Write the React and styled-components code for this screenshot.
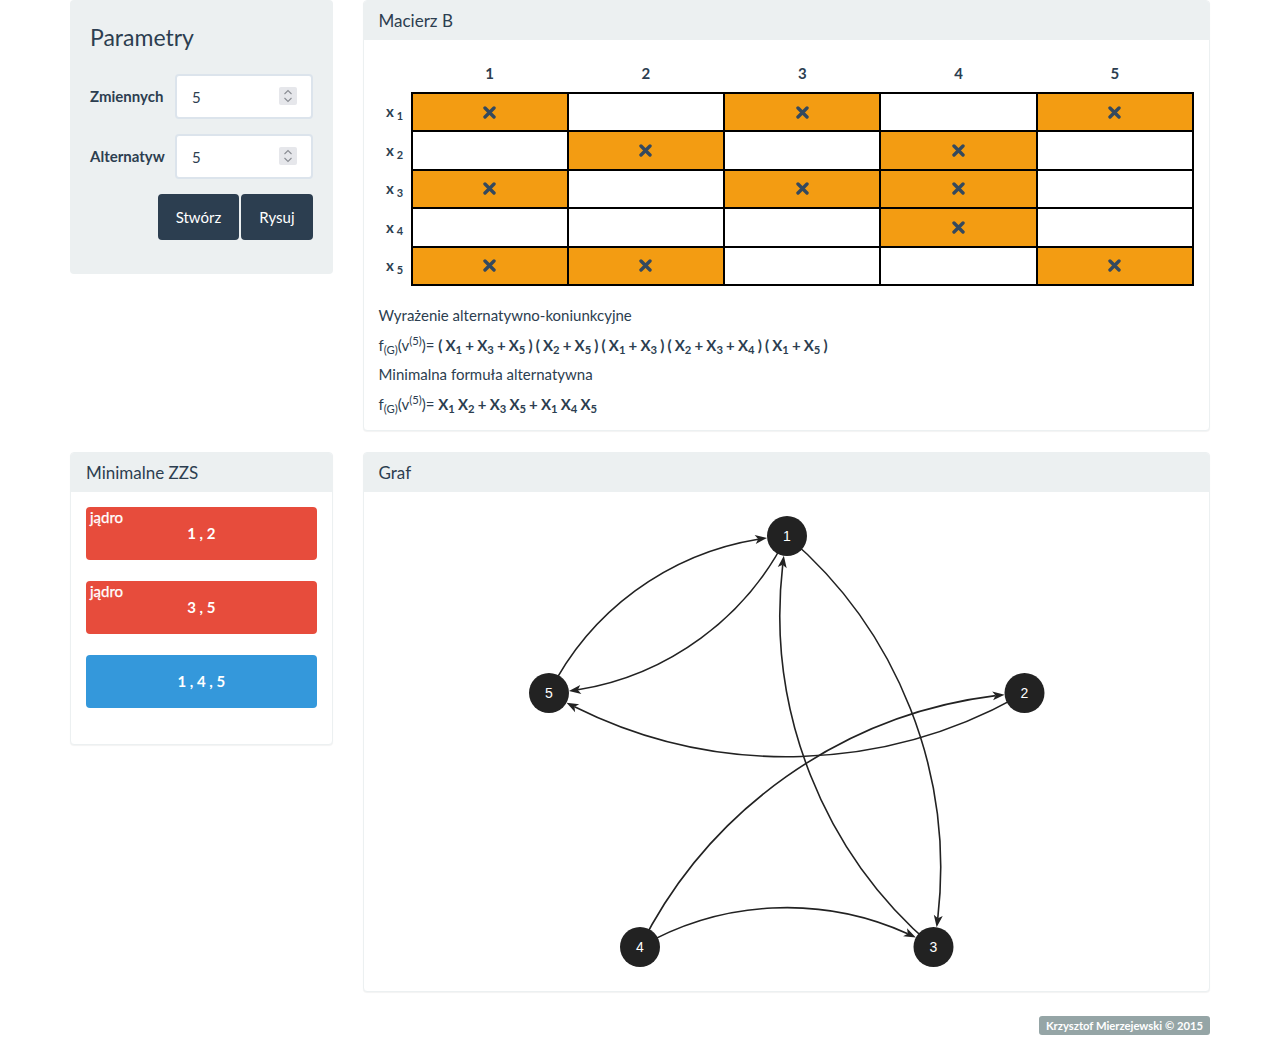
import React from 'react';
import styled, { createGlobalStyle } from 'styled-components';

const GlobalStyle = createGlobalStyle`
  html, body { margin: 0; padding: 0; background: #fff; }
  body {
    font-family: Lato, "Open Sans", "Liberation Sans", sans-serif;
    font-size: 15px;
    line-height: 1.42857;
    color: #2c3e50;
  }
  * { box-sizing: border-box; }
`;

const Container = styled.div`
  width: 1140px;
  margin: 0 auto;
  display: grid;
  grid-template-columns: 262.5px 847.5px;
  column-gap: 30px;
  align-items: start;
`;

const Well = styled.div`
  background: #ecf0f1;
  border-radius: 4px;
  padding: 19px 20px 19px 20px;
`;

const WellTitle = styled.h3`
  margin: 0 0 19px;
  font-size: 23px;
  font-weight: 400;
  line-height: 36px;
`;

const FormRow = styled.div`
  display: grid;
  grid-template-columns: 85px 1fr;
  align-items: center;
  margin-bottom: 15px;
`;

const Label = styled.label`
  font-weight: 700;
  font-size: 15px;
`;

const InputWrap = styled.div`
  position: relative;
`;

const NumberInput = styled.input`
  display: block;
  width: 100%;
  height: 45px;
  padding: 10px 15px;
  font-family: inherit;
  font-size: 15px;
  color: #2c3e50;
  border: 2px solid #dce4ec;
  border-radius: 4px;
  background: #fff;
  outline: none;
  appearance: textfield;
  &::-webkit-inner-spin-button,
  &::-webkit-outer-spin-button {
    -webkit-appearance: none;
    margin: 0;
  }
`;

const Spinner = styled.span`
  position: absolute;
  right: 16px;
  top: 13px;
  width: 18px;
  height: 18px;
  background: #e6e7eb;
  border-radius: 2px;
  pointer-events: none;
  display: flex;
  align-items: center;
  justify-content: center;
`;

const Actions = styled.div`
  display: flex;
  justify-content: flex-end;
  gap: 2px;
  margin-bottom: 15px;
`;

const Button = styled.button`
  font-family: inherit;
  font-size: 15px;
  line-height: 21px;
  padding: 10px 16px;
  color: #fff;
  background: #2c3e50;
  border: 2px solid #2c3e50;
  border-radius: 4px;
  height: 46px;
`;

const Panel = styled.div`
  background: #fff;
  border: 1px solid #ecf0f1;
  border-radius: 4px;
  box-shadow: 0 1px 1px rgba(0, 0, 0, 0.05);
  margin-bottom: 21px;
`;

const PanelHeading = styled.div`
  background: #ecf0f1;
  padding: 10px 15px 8px;
  border-bottom: 1px solid transparent;
  border-radius: 3px 3px 0 0;
`;

const PanelTitle = styled.h3`
  margin: 0;
  font-size: 17px;
  font-weight: 400;
  line-height: 20px;
`;

const PanelBody = styled.div`
  padding: ${(p) => (p.$flush ? '0' : '15px')};
`;

const Matrix = styled.table`
  width: 100%;
  border-collapse: collapse;
  table-layout: fixed;
  margin-bottom: 19px;
`;

const HeadCell = styled.th`
  height: 38px;
  padding: 0;
  font-weight: 700;
  text-align: center;
  vertical-align: middle;
  width: ${(p) => (p.$narrow ? '33px' : 'auto')};
`;

const RowLabel = styled.th`
  padding: 0;
  font-weight: 700;
  text-align: center;
  vertical-align: middle;
`;

const Cell = styled.td`
  height: 38.4px;
  padding: 0;
  border: 2px solid #000;
  background: ${(p) => (p.$on ? '#f39c12' : '#fff')};
  text-align: center;
  vertical-align: middle;
  line-height: 0;
`;

const LabelSub = styled.sub`
  font-size: 11px;
  margin-left: 3px;
  position: relative;
  bottom: -0.25em;
  vertical-align: baseline;
  line-height: 0;
`;

const Line = styled.div`
  line-height: ${(p) => (p.$formula ? '22px' : '21px')};
  margin-bottom: ${(p) => (p.$last ? '0' : '8px')};
  white-space: nowrap;
`;

const Expr = styled.span`
  font-weight: 700;
  word-spacing: -0.5px;
`;

const Sub = styled.sub`
  font-size: 75%;
  position: relative;
  bottom: -0.25em;
  vertical-align: baseline;
  line-height: 0;
`;

const Sup = styled.sup`
  font-size: 75%;
  position: relative;
  top: -0.5em;
  vertical-align: baseline;
  line-height: 0;
`;

const Alert = styled.div`
  position: relative;
  padding: 15px;
  border: 1px solid transparent;
  border-radius: 4px;
  margin-bottom: 21px;
  background: ${(p) => (p.$tone === 'danger' ? '#e74c3c' : '#3498db')};
  color: #fff;
  text-align: center;
  font-weight: 700;
  line-height: 21px;
`;

const Kernel = styled.span`
  position: absolute;
  left: 3px;
  top: -1px;
  font-weight: 400;
  -webkit-text-stroke: 0.25px #fff;
`;

const GraphSvg = styled.svg`
  display: block;
  width: 100%;
  height: 499px;
`;

const Footer = styled.div`
  grid-column: 1 / -1;
  display: flex;
  justify-content: flex-end;
  padding-top: 3px;
`;

const Badge = styled.span`
  background: #95a5a6;
  color: #fff;
  font-size: 11.25px;
  font-weight: 700;
  line-height: 13px;
  padding: 3px 7px;
  border-radius: 3px;
`;

function SpinIcon() {
  return (
    <svg width="12" height="16" viewBox="0 0 12 16">
      <path d="M2.5 6 L6 2.5 L9.5 6 M2.5 10 L6 13.5 L9.5 10" fill="none" stroke="#8a8d93" strokeWidth="1.1" />
    </svg>
  );
}

function Cross() {
  return (
    <svg width="13" height="13" viewBox="0 0 13 13" style={{ display: 'inline-block', verticalAlign: 'middle' }}>
      <path d="M2 2 L11 11 M11 2 L2 11" stroke="#34495e" strokeWidth="3.4" strokeLinecap="round" />
    </svg>
  );
}

const matrix = [
  [1, 0, 1, 0, 1],
  [0, 1, 0, 1, 0],
  [1, 0, 1, 1, 0],
  [0, 0, 0, 1, 0],
  [1, 1, 0, 0, 1],
];

const nodes = {
  1: { x: 423, y: 44 },
  2: { x: 660.5, y: 201 },
  3: { x: 569.5, y: 455 },
  4: { x: 276, y: 455 },
  5: { x: 185, y: 201 },
};

const edges = [
  [5, 1],
  [1, 5],
  [1, 3],
  [3, 1],
  [2, 5],
  [4, 2],
  [4, 3],
];

const R_NODE = 20;
const ARROW_L = 12;
const ARROW_W = 4.5;

function arcEdge(a, b) {
  const dx = b.x - a.x;
  const dy = b.y - a.y;
  const d = Math.hypot(dx, dy);
  const ux = dx / d;
  const uy = dy / d;
  const k = (Math.sqrt(3) / 2) * d;
  const cx = (a.x + b.x) / 2 - k * uy;
  const cy = (a.y + b.y) / 2 + k * ux;
  const R = d;
  const a1 = Math.atan2(a.y - cy, a.x - cx);
  const end = a1 + Math.PI / 3;
  const tipAng = end - 2 * Math.asin(R_NODE / (2 * R));
  const lineAng = tipAng - (ARROW_L - 3) / R;
  const tx = cx + R * Math.cos(tipAng);
  const ty = cy + R * Math.sin(tipAng);
  const ex = cx + R * Math.cos(lineAng);
  const ey = cy + R * Math.sin(lineAng);
  const tdx = -Math.sin(tipAng);
  const tdy = Math.cos(tipAng);
  const nx = -tdy;
  const ny = tdx;
  const bx = tx - ARROW_L * tdx;
  const by = ty - ARROW_L * tdy;
  const mx = tx - (ARROW_L - 3) * tdx;
  const my = ty - (ARROW_L - 3) * tdy;
  const path = `M${a.x},${a.y} A${R},${R} 0 0,1 ${ex.toFixed(2)},${ey.toFixed(2)}`;
  const head = `M${tx.toFixed(2)},${ty.toFixed(2)} L${(bx + ARROW_W * nx).toFixed(2)},${(by + ARROW_W * ny).toFixed(2)} L${mx.toFixed(2)},${my.toFixed(2)} L${(bx - ARROW_W * nx).toFixed(2)},${(by - ARROW_W * ny).toFixed(2)} Z`;
  return { path, head };
}

function Graph() {
  return (
    <GraphSvg>
      {edges.map(([s, t]) => {
        const { path, head } = arcEdge(nodes[s], nodes[t]);
        return (
          <g key={`${s}-${t}`}>
            <path d={path} fill="none" stroke="#222" strokeWidth="1.6" />
            <path d={head} fill="#222" />
          </g>
        );
      })}
      {Object.entries(nodes).map(([id, n]) => (
        <g key={id}>
          <circle cx={n.x} cy={n.y} r={R_NODE} fill="#222" />
          <text
            x={n.x}
            y={n.y}
            fill="#fff"
            fontSize="14"
            fontFamily='"Liberation Sans", Arial, sans-serif'
            textAnchor="middle"
            dominantBaseline="central"
          >
            {id}
          </text>
        </g>
      ))}
    </GraphSvg>
  );
}

const X = ({ n }) => (
  <>
    X<Sub>{n}</Sub>
  </>
);

function NumberField() {
  return (
    <InputWrap>
      <NumberInput type="number" defaultValue={5} />
      <Spinner>
        <SpinIcon />
      </Spinner>
    </InputWrap>
  );
}

export default function App() {
  return (
    <>
      <GlobalStyle />
      <Container>
        <Well>
          <WellTitle>Parametry</WellTitle>
          <FormRow>
            <Label>Zmiennych</Label>
            <NumberField />
          </FormRow>
          <FormRow>
            <Label>Alternatyw</Label>
            <NumberField />
          </FormRow>
          <Actions>
            <Button>Stwórz</Button>
            <Button>Rysuj</Button>
          </Actions>
        </Well>

        <Panel>
          <PanelHeading>
            <PanelTitle>Macierz B</PanelTitle>
          </PanelHeading>
          <PanelBody>
            <Matrix>
              <thead>
                <tr>
                  <HeadCell $narrow />
                  {[1, 2, 3, 4, 5].map((c) => (
                    <HeadCell key={c}>{c}</HeadCell>
                  ))}
                </tr>
              </thead>
              <tbody>
                {matrix.map((row, i) => (
                  <tr key={i}>
                    <RowLabel>
                      x<LabelSub>{i + 1}</LabelSub>
                    </RowLabel>
                    {row.map((v, j) => (
                      <Cell key={j} $on={v === 1}>
                        {v === 1 && <Cross />}
                      </Cell>
                    ))}
                  </tr>
                ))}
              </tbody>
            </Matrix>
            <Line>Wyrażenie alternatywno-koniunkcyjne</Line>
            <Line $formula>
              f<Sub>(G)</Sub>(v<Sup>(5)</Sup>)={' '}
              <Expr>
                ( <X n={1} /> + <X n={3} /> + <X n={5} /> ) ( <X n={2} /> + <X n={5} /> ) ( <X n={1} /> + <X n={3} /> ) ( <X n={2} /> + <X n={3} /> + <X n={4} /> ) ( <X n={1} /> + <X n={5} /> )
              </Expr>
            </Line>
            <Line>Minimalna formuła alternatywna</Line>
            <Line $formula $last>
              f<Sub>(G)</Sub>(v<Sup>(5)</Sup>)={' '}
              <Expr>
                <X n={1} /> <X n={2} /> + <X n={3} /> <X n={5} /> + <X n={1} /> <X n={4} /> <X n={5} />
              </Expr>
            </Line>
          </PanelBody>
        </Panel>

        <Panel>
          <PanelHeading>
            <PanelTitle>Minimalne ZZS</PanelTitle>
          </PanelHeading>
          <PanelBody>
            <Alert $tone="danger">
              <Kernel>jądro</Kernel>1 , 2
            </Alert>
            <Alert $tone="danger">
              <Kernel>jądro</Kernel>3 , 5
            </Alert>
            <Alert $tone="info">1 , 4 , 5</Alert>
          </PanelBody>
        </Panel>

        <Panel>
          <PanelHeading>
            <PanelTitle>Graf</PanelTitle>
          </PanelHeading>
          <PanelBody $flush>
            <Graph />
          </PanelBody>
        </Panel>

        <Footer>
          <Badge>Krzysztof Mierzejewski © 2015</Badge>
        </Footer>
      </Container>
    </>
  );
}
